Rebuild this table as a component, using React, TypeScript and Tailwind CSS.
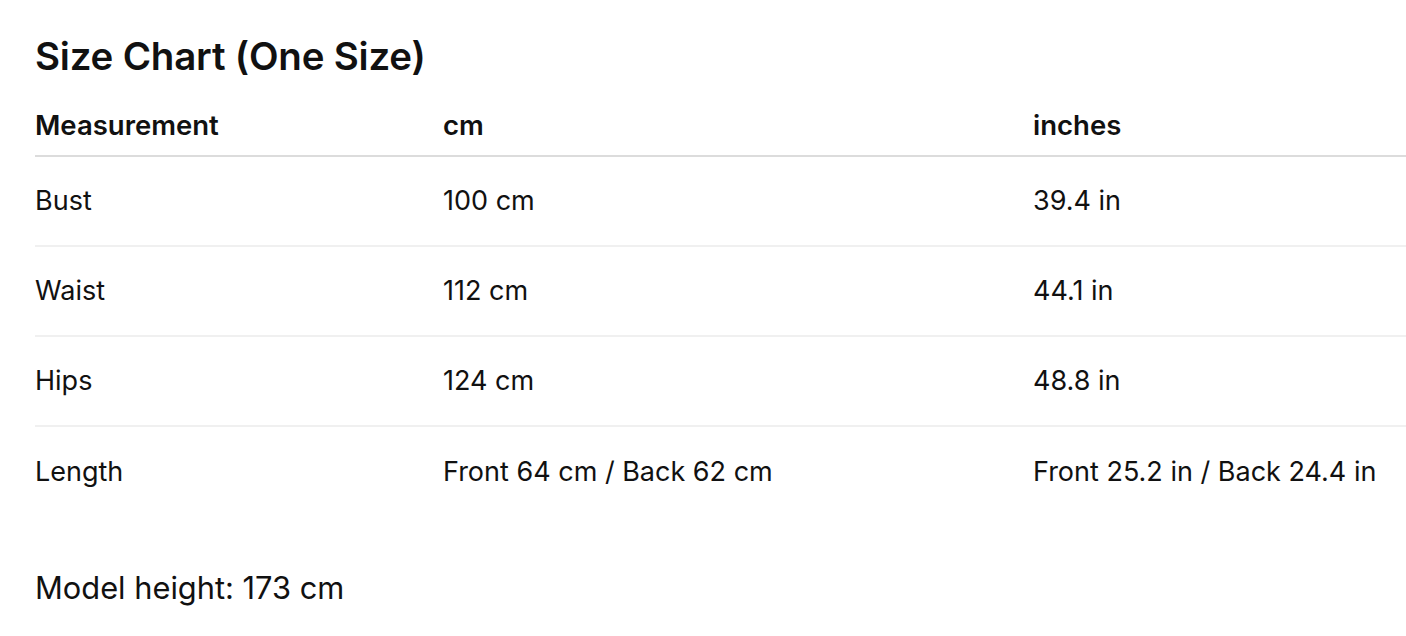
import React from 'react'

const rows = [
  { name: 'Bust', cm: '100 cm', inches: '39.4 in' },
  { name: 'Waist', cm: '112 cm', inches: '44.1 in' },
  { name: 'Hips', cm: '124 cm', inches: '48.8 in' },
  { name: 'Length', cm: 'Front 64 cm / Back 62 cm', inches: 'Front 25.2 in / Back 24.4 in' },
]

export default function App() {
  return (
    <div className="min-h-screen bg-white pl-[35px] pt-[36px] text-[#111] font-['Inter',sans-serif]">
      <h2 className="text-[38.5px] font-semibold leading-[40px] tracking-[-0.2px]">Size Chart (One Size)</h2>
      <table className="mt-[23px] w-[1371px] border-collapse text-left text-[27px]">
        <thead>
          <tr className="border-b-2 border-[#dcdcdc]">
            <th className="w-[408px] pb-[14px] pt-[10px] text-[27.5px] font-semibold leading-[32px]">Measurement</th>
            <th className="w-[590px] pb-[14px] pt-[10px] text-[27.5px] font-semibold leading-[32px]">cm</th>
            <th className="pb-[14px] pt-[10px] text-[27.5px] font-semibold leading-[32px]">inches</th>
          </tr>
        </thead>
        <tbody>
          {rows.map((r, i) => (
            <tr key={r.name} className={i < rows.length - 1 ? 'border-b-2 border-[#f0f0f0]' : ''}>
              <td className="h-[90px] align-middle leading-[32px]">{r.name}</td>
              <td className="h-[90px] align-middle leading-[32px]">{r.cm}</td>
              <td className="h-[90px] align-middle leading-[32px]">{r.inches}</td>
            </tr>
          ))}
        </tbody>
      </table>
      <p className="mt-[54px] text-[30.8px] leading-[36px]">Model height: 173 cm</p>
    </div>
  )
}
